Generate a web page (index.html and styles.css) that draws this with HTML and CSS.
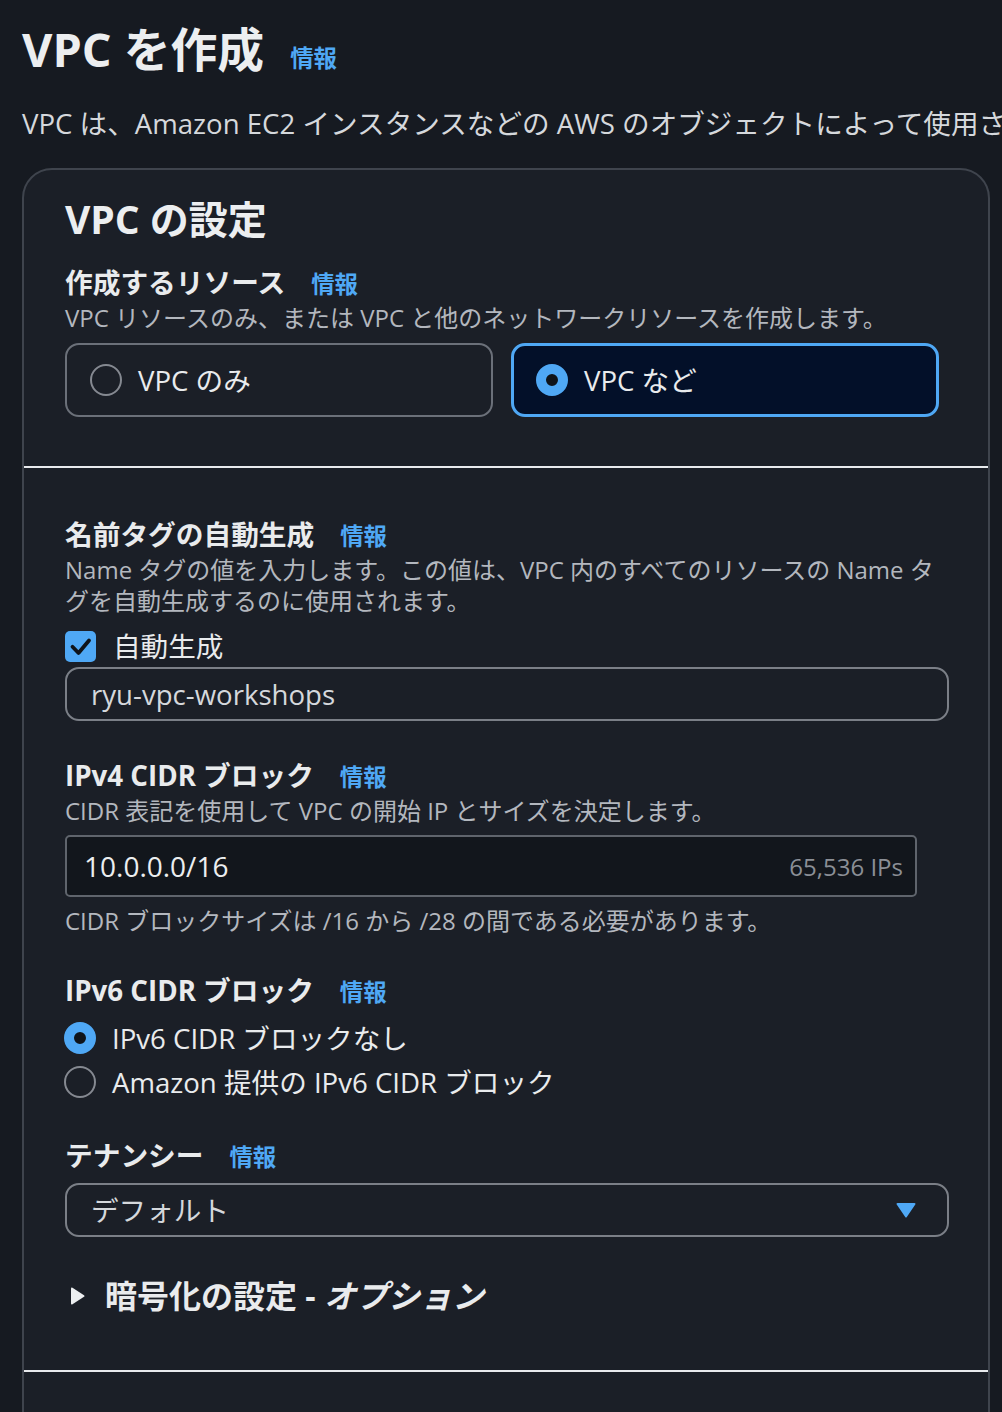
FILE: index.html
```html
<!DOCTYPE html>
<html lang="ja">
<head>
<meta charset="utf-8">
<title>VPC を作成</title>
<link rel="stylesheet" href="styles.css">
</head>
<body>
<main class="page">
  <header class="page-header">
    <h1 class="title"><span>VPC を作成</span><a class="info">情報</a></h1>
    <p class="lead">VPC は、Amazon EC2 インスタンスなどの AWS のオブジェクトによって使用される、隔離された仮想ネットワークです。</p>
  </header>

  <section class="card">
    <div class="card-section first">
      <h2 class="card-title">VPC の設定</h2>
      <div class="label"><span>作成するリソース</span><a class="info">情報</a></div>
      <div class="desc">VPC リソースのみ、または VPC と他のネットワークリソースを作成します。</div>
      <div class="tiles">
        <div class="tile">
          <span class="radio"></span>
          <span class="tile-text">VPC のみ</span>
        </div>
        <div class="tile selected">
          <span class="radio checked"></span>
          <span class="tile-text">VPC など</span>
        </div>
      </div>
    </div>

    <div class="card-section second">
      <div class="label"><span>名前タグの自動生成</span><a class="info">情報</a></div>
      <div class="desc">Name タグの値を入力します。この値は、VPC 内のすべてのリソースの Name タグを自動生成するのに使用されます。</div>
      <div class="check-row">
        <svg class="checkbox" width="31" height="31" viewBox="0 0 31 31"><rect width="31" height="31" rx="5" fill="#4fa8f5"/><path d="M7.5 15.8l6 6.2 10.5-12.5" fill="none" stroke="#0f141a" stroke-width="3.8" stroke-linecap="round" stroke-linejoin="round"/></svg>
        <span>自動生成</span>
      </div>
      <div class="input">ryu-vpc-workshops</div>

      <div class="label gap-lg"><span>IPv4 CIDR ブロック</span><a class="info">情報</a></div>
      <div class="desc">CIDR 表記を使用して VPC の開始 IP とサイズを決定します。</div>
      <div class="cidr-input"><span class="cidr-value">10.0.0.0/16</span><span class="cidr-count">65,536 IPs</span></div>
      <div class="desc constraint">CIDR ブロックサイズは /16 から /28 の間である必要があります。</div>

      <div class="label gap-lg"><span>IPv6 CIDR ブロック</span><a class="info">情報</a></div>
      <div class="radio-group">
        <div class="radio-row"><span class="radio checked"></span><span>IPv6 CIDR ブロックなし</span></div>
        <div class="radio-row"><span class="radio"></span><span>Amazon 提供の IPv6 CIDR ブロック</span></div>
      </div>

      <div class="label gap-md"><span>テナンシー</span><a class="info">情報</a></div>
      <div class="select">
        <span>デフォルト</span>
        <svg class="caret" width="20" height="16" viewBox="0 0 20 16"><path d="M1.5 1h17a1 1 0 0 1 .8 1.6L10.8 15a1 1 0 0 1-1.6 0L.7 2.6A1 1 0 0 1 1.5 1z" fill="#4fa8f5"/></svg>
      </div>

      <div class="expand">
        <svg class="expand-icon" width="15" height="18" viewBox="0 0 15 18"><path d="M1 1.5v15a1 1 0 0 0 1.5.8l11.5-7.5a1 1 0 0 0 0-1.6L2.5.7A1 1 0 0 0 1 1.5z" fill="#eceef0"/></svg>
        <span>暗号化の設定 - <em>オプション</em></span>
      </div>
    </div>

    <div class="card-section third"></div>
  </section>
</main>
</body>
</html>
```

FILE: styles.css
```css
html, body {
  margin: 0;
  padding: 0;
}

body {
  background: #161a21;
  color: #e9ebed;
  font-family: "Open Sans", "Noto Sans CJK JP", sans-serif;
  overflow: hidden;
  height: 1412px;
}

.page {
  padding: 21px 12px 0 22px;
  overflow: hidden;
}

.title {
  margin: 0;
  display: flex;
  align-items: baseline;
  gap: 26px;
  height: 56px;
  font-size: 46.8px;
  line-height: 56px;
  font-weight: 700;
  color: #eceef0;
}

.info {
  color: #4fa8f5;
  font-size: 23.4px;
  line-height: 1;
  font-weight: 700;
  text-decoration: none;
}

.lead {
  margin: 28px 0 0;
  font-size: 27.6px;
  line-height: 36px;
  color: #d5d8dc;
  white-space: nowrap;
}

.card {
  margin-top: 27px;
  background: #1b1f27;
  border: 2px solid #3f444d;
  border-radius: 30px;
  box-sizing: border-box;
  width: 968px;
}

.card-section {
  padding: 0 39px 0 41px;
}

.card-section.first {
  padding-top: 25px;
  padding-bottom: 49px;
  border-bottom: 2px solid #e8eaed;
}

.card-section.second {
  padding-top: 48px;
  padding-bottom: 52px;
  border-bottom: 2px solid #e8eaed;
}

.card-section.third {
  height: 120px;
}

.card-title {
  margin: 0;
  font-size: 39px;
  line-height: 48px;
  font-weight: 700;
  color: #eceef0;
}

.label {
  display: flex;
  align-items: baseline;
  gap: 26px;
  height: 36px;
  font-size: 27.7px;
  line-height: 36px;
  font-weight: 700;
  color: #e9ebed;
}

.card-title + .label {
  margin-top: 21px;
}

.label.gap-lg {
  margin-top: 36px;
}

.label.gap-md {
  margin-top: 33px;
}

.desc {
  margin-top: 2px;
  font-size: 24px;
  line-height: 31px;
  color: #b3b7be;
}

.desc.constraint {
  margin-top: 8px;
}

.tiles {
  margin-top: 10px;
  display: grid;
  grid-template-columns: 428px 428px;
  gap: 18px;
}

.tile {
  height: 74px;
  box-sizing: border-box;
  border: 2px solid #6b7079;
  border-radius: 14px;
  display: flex;
  align-items: center;
  gap: 16px;
  padding-left: 23px;
  font-size: 27.6px;
  line-height: 36px;
  color: #e9ebed;
}

.tile.selected {
  border: 3px solid #4fa8f5;
  background: #031029;
  padding-left: 22px;
}

.radio {
  flex: none;
  width: 32px;
  height: 32px;
  box-sizing: border-box;
  border-radius: 50%;
  border: 2px solid #858991;
}

.radio.checked {
  border: 10px solid #4fa8f5;
  background: #0f141a;
}

.check-row {
  margin-top: 12px;
  display: flex;
  align-items: center;
  gap: 17px;
  height: 36px;
  font-size: 27.6px;
  line-height: 36px;
  color: #e9ebed;
}

.checkbox {
  flex: none;
  display: block;
}

.input,
.select {
  box-sizing: border-box;
  height: 54px;
  border: 2px solid #7b7f87;
  border-radius: 14px;
  display: flex;
  align-items: center;
  padding: 0 31px 0 24px;
  font-size: 27.6px;
  line-height: 36px;
  color: #d5d8dc;
}

.input {
  margin-top: 3px;
}

.select {
  margin-top: 10px;
  justify-content: space-between;
}

.caret {
  display: block;
  flex: none;
}

.cidr-input {
  margin-top: 9px;
  box-sizing: border-box;
  width: 852px;
  height: 62px;
  border: 2px solid #5f646c;
  border-radius: 5px;
  background: #12161c;
  display: flex;
  align-items: center;
  justify-content: space-between;
  padding: 0 12px 0 17px;
}

.cidr-value {
  font-size: 28px;
  color: #eceef0;
}

.cidr-count {
  font-size: 24px;
  color: #8b8f96;
}

.radio-group {
  margin-top: 8px;
}

.radio-row {
  height: 44px;
  display: flex;
  align-items: center;
  gap: 16px;
  margin-left: -1px;
  font-size: 27.6px;
  line-height: 36px;
  color: #e9ebed;
}

.expand {
  margin-top: 37px;
  display: flex;
  align-items: center;
  gap: 20px;
  padding-left: 5px;
  font-size: 32px;
  line-height: 44px;
  font-weight: 700;
  color: #e9ebed;
}

.expand em {
  font-style: italic;
}

.expand-icon {
  display: block;
  flex: none;
}
```
